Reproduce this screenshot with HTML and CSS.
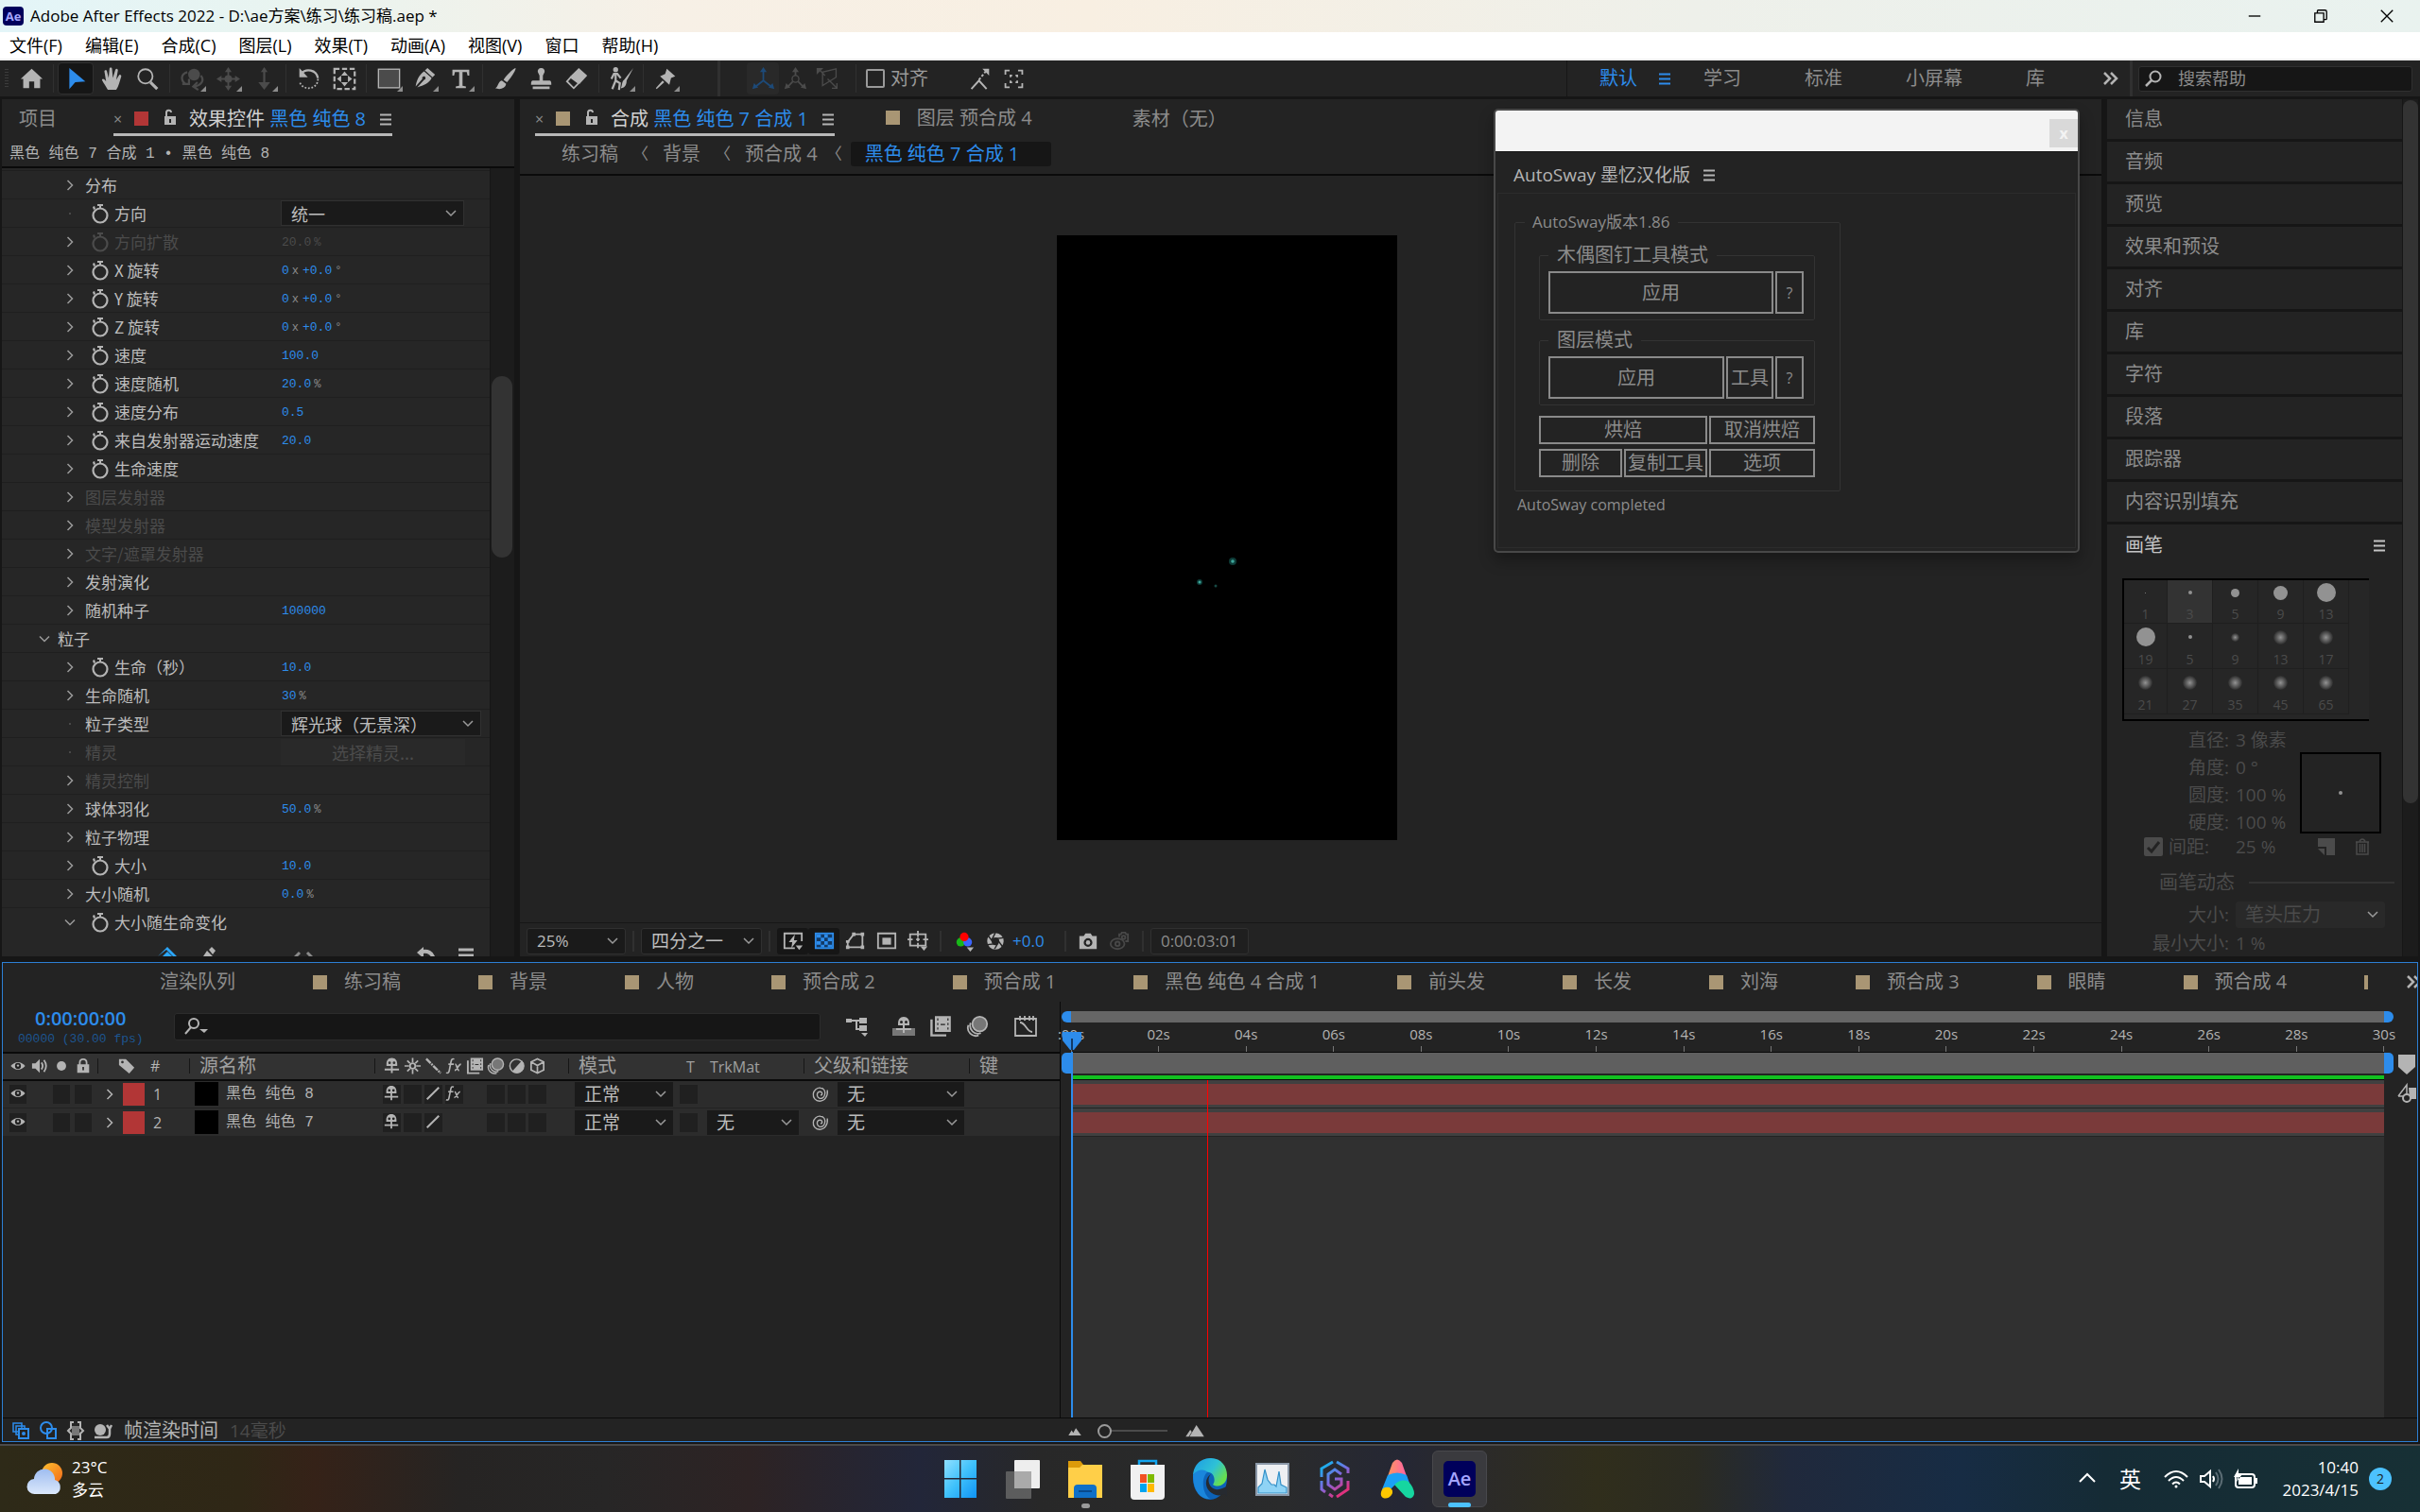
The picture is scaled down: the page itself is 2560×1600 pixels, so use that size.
FILE: index.html
```
<!DOCTYPE html>
<html lang="zh-CN">
<head>
    <meta charset="UTF-8">
    <title>Adobe After Effects 2022 - D:\ae方案\练习\练习稿.aep *</title>
    <link rel="stylesheet" href="styles.css">
</head>
<body>
    <!-- shared icons -->
    <svg class="sprite" aria-hidden="true">
        <symbol id="i-watch" viewBox="0 0 20 22"><circle cx="10" cy="13" r="7.5" fill="none" stroke="currentColor" stroke-width="2.2"/><path d="M7 1h6v2h-2v3H9V3H7zM2 4l2-1 1 3-2 1z" fill="currentColor"/></symbol>
        <symbol id="i-right" viewBox="0 0 16 16"><path d="M5.5 3l5 5-5 5" fill="none" stroke="currentColor" stroke-width="1.5"/></symbol>
        <symbol id="i-down" viewBox="0 0 16 16"><path d="M3 5.5l5 5 5-5" fill="none" stroke="currentColor" stroke-width="1.5"/></symbol>
        <symbol id="i-menu" viewBox="0 0 14 14"><path d="M1 2.5h12M1 7.5h12M1 12.5h12" stroke="currentColor" stroke-width="2"/></symbol>
        <symbol id="i-lock-open" viewBox="0 0 14 18"><path d="M3 9V4.500a2.500 2.500 0 0 1 5-.5" fill="none" stroke="currentColor" stroke-width="2"/><path fill="currentColor" fill-rule="evenodd" d="M1 8h12v9H1zM6 11v4h2v-4z"/></symbol>
        <symbol id="i-fish" viewBox="0 0 20 20"><path fill="currentColor" fill-rule="evenodd" d="M10 1c4 0 6 3 6 7v2H11v3h7v2h-7v3H9v-3H2v-2h7v-3H4V8c0-4 2-7 6-7zM7.500 5a1.500 1.500 0 1 0 0 3 1.500 1.500 0 0 0 0-3zM12.500 5a1.500 1.500 0 1 0 0 3 1.500 1.500 0 0 0 0-3z"/></symbol>
        <symbol id="i-film" viewBox="0 0 20 20"><path fill="currentColor" fill-rule="evenodd" d="M5 1h14v14H5zM7 3v2h1V3zM7 7v2h1V7zM7 11v2h1v-2zM16 3v2h1V3zM16 7v2h1V7zM16 11v2h1v-2zM10 8v1h4V8z"/><path d="M2 4v14h13" fill="none" stroke="currentColor" stroke-width="2"/></symbol>
        <symbol id="i-blur" viewBox="0 0 20 20"><circle cx="12" cy="8" r="6.5" fill="#777" stroke="currentColor" stroke-width="1.5"/><path d="M4 7a7 7 0 0 0 9 9M2 9a7 7 0 0 0 9 9" fill="none" stroke="currentColor" stroke-width="1.5"/></symbol>
        <symbol id="i-eye" viewBox="0 0 20 20"><path d="M1.500 10Q10 1 18.500 10 10 19 1.500 10z" fill="currentColor"/><circle cx="10" cy="10" r="3.5" fill="#232323"/><circle cx="10" cy="9.5" r="1.3" fill="currentColor"/></symbol>
        <symbol id="i-fx" viewBox="0 0 20 20"><path d="M10 2.500c-2-1-3 0-3.500 2.500L4.500 15c-.5 2.500-1.500 3.500-3.500 2.500M3.500 8h6M11 8c2 0 2 7 4.500 7M17.500 8c-3 0-4 7-7 7" fill="none" stroke="currentColor" stroke-width="1.7"/></symbol>
        <symbol id="i-slash" viewBox="0 0 20 20"><path d="M3 17L17 3" stroke="currentColor" stroke-width="2.2"/></symbol>
        <symbol id="i-spiral" viewBox="0 0 20 20"><path d="M18 5c1 7-3 13-9 13-5 0-8-4-7.500-8.500S6 2 10 2.500c4 0 6 4 5 8s-4 5-6.500 4-3-4-2-6 4-2 5-.5 0 3-1.500 3" fill="none" stroke="currentColor" stroke-width="1.5"/></symbol>
        <symbol id="i-search" viewBox="0 0 20 20"><circle cx="12" cy="8" r="5.5" fill="none" stroke="currentColor" stroke-width="2"/><path d="M8 12l-6 6" stroke="currentColor" stroke-width="2.5"/></symbol>
        <symbol id="i-more" viewBox="0 0 18 18"><path d="M2 3l6 6-6 6M9 3l6 6-6 6" fill="none" stroke="currentColor" stroke-width="2.5"/></symbol>
    </svg>

    <header class="titlebar">
        <svg class="app-logo" viewBox="0 0 22 22"><rect width="22" height="20" y="1" rx="4" fill="#00005b"/><text x="11" y="16" text-anchor="middle">Ae</text></svg>
        <span class="title">Adobe After Effects 2022 - D:\ae方案\练习\练习稿.aep *</span>
        <div class="window-buttons">
            <button aria-label="最小化"><svg viewBox="0 0 18 18"><path d="M2 9h14"/></svg></button>
            <button aria-label="还原"><svg viewBox="0 0 18 18"><path d="M2 5.500h10.500V16H2zM5 5V3q0-1 1-1h8q2 0 2 2v8q0 1-1 1h-2"/></svg></button>
            <button aria-label="关闭"><svg viewBox="0 0 18 18"><path d="M2 2l14 14M16 2L2 16"/></svg></button>
        </div>
    </header>

    <nav class="menubar">
        <a href="#">文件(F)</a><a href="#">编辑(E)</a><a href="#">合成(C)</a><a href="#">图层(L)</a><a href="#">效果(T)</a><a href="#">动画(A)</a><a href="#">视图(V)</a><a href="#">窗口</a><a href="#">帮助(H)</a>
    </nav>

    <div class="toolbar">
        <span class="grip"></span>
        <button class="tool" aria-label="主页"><svg viewBox="0 0 28 28"><path fill="currentColor" d="M14 2L1 14h3v11h7v-8h6v8h7V14h3z"/></svg></button>
        <i class="sep"></i>
        <button class="tool on" aria-label="选取工具"><svg viewBox="0 0 28 28"><path fill="currentColor" d="M6 1v25l7-8 12-1z"/></svg></button>
        <button class="tool" aria-label="手形工具"><svg viewBox="0 0 28 28"><path fill="currentColor" d="M9 27c-2-4-5-8-7-12 1-2 3-1 5 2L5 5c0-2 3-2 3 0l2 8 1-11c0-2 3-2 3 0l1 11 3-10c1-2 3-1 3 1l-2 11 3-5c1-2 3-1 3 1-2 6-3 12-6 16z"/></svg></button>
        <button class="tool" aria-label="缩放工具"><svg viewBox="0 0 28 28"><circle cx="11" cy="11" r="8.5" fill="none" stroke="currentColor" stroke-width="2"/><path d="M17 18l8 8" stroke="currentColor" stroke-width="3.5"/></svg></button>
        <i class="sep"></i>
        <button class="tool more dim" aria-label="绕光标旋转"><svg viewBox="0 0 28 28"><circle cx="16" cy="9" r="7" fill="currentColor"/><path d="M8 6C0 8 0 16 6 20M2 20h8v-6M24 10c5 6 0 12-8 13M20 18l-5 5 6 4" fill="none" stroke="currentColor" stroke-width="2.5"/></svg></button>
        <button class="tool more dim" aria-label="平移"><svg viewBox="0 0 28 28"><circle cx="14" cy="14" r="4.5" fill="currentColor"/><path d="M14 5v18M5 14h18" stroke="currentColor" stroke-width="2"/><path fill="currentColor" d="M14 0l4 6h-8zM14 28l4-6h-8zM0 14l6-4v8zM28 14l-6-4v8z"/></svg></button>
        <button class="tool more dim" aria-label="推拉"><svg viewBox="0 0 28 28"><path d="M14 2v18" stroke="currentColor" stroke-width="2.5"/><path fill="currentColor" d="M14 0l4 6h-8zM14 27l7-9H7z"/></svg></button>
        <i class="sep"></i>
        <button class="tool" aria-label="旋转工具"><svg viewBox="0 0 28 28"><path d="M5 8c6-7 18-5 20 5" fill="none" stroke="currentColor" stroke-width="2.5"/><path d="M25 14c0 13-18 15-22 3" fill="none" stroke="currentColor" stroke-width="2" stroke-dasharray="2 2"/><path fill="currentColor" d="M3 1v11h10z"/></svg></button>
        <button class="tool" aria-label="锚点工具"><svg viewBox="0 0 28 28"><path d="M2 2h24v24H2z" fill="none" stroke="currentColor" stroke-width="2.5" stroke-dasharray="6 3"/><path fill="currentColor" d="M14 5l4 5h-8zM14 23l4-5h-8zM5 14l5-4v8zM23 14l-5-4v8z"/></svg></button>
        <i class="sep"></i>
        <button class="tool more" aria-label="矩形工具"><svg viewBox="0 0 28 28"><rect x="1.500" y="2.500" width="25" height="22" fill="#4b4b4b" stroke="currentColor" stroke-width="1.5"/></svg></button>
        <button class="tool more" aria-label="钢笔工具"><svg viewBox="0 0 28 28"><path fill="currentColor" fill-rule="evenodd" d="M17 1l9 8-3 3-9-8zM13 5l9 8c-3 6-9 9-17 11l8-9a2 2 0 1 0-2-1l-8 9C4 16 7 9 13 5z"/></svg></button>
        <button class="tool more" aria-label="文字工具"><svg viewBox="0 0 28 28"><path fill="currentColor" d="M4 3h20v7h-2l-1-4h-5v16l4 1v2H8v-2l4-1V6H7l-1 4H4z"/></svg></button>
        <i class="sep"></i>
        <button class="tool" aria-label="画笔工具"><svg viewBox="0 0 28 28"><path fill="currentColor" d="M26 1c2 1-7 14-10 17l-4-3C14 11 24 1 26 1zM10 16l5 4c-1 6-8 7-13 5 4-1 3-8 8-9z"/></svg></button>
        <button class="tool" aria-label="仿制图章工具"><svg viewBox="0 0 28 28"><path fill="currentColor" d="M14 1a4 4 0 0 1 4 5l-2 4v6h8q2 0 2 4v1H2v-1q0-4 2-4h8v-6l-2-4a4 4 0 0 1 4-5zM4 23h20v3H4z"/></svg></button>
        <button class="tool" aria-label="橡皮擦工具"><svg viewBox="0 0 28 28"><path fill="currentColor" d="M16 1l10 9-9 10L6 11z"/><path d="M6.500 12L2 17l8 8 6-6z" fill="none" stroke="currentColor" stroke-width="2"/></svg></button>
        <i class="sep"></i>
        <button class="tool more" aria-label="Roto 笔刷工具"><svg viewBox="0 0 28 28"><circle cx="7" cy="3" r="3" fill="currentColor"/><path d="M2 14l3-6h4l4 5M7 8v8l-4 10M7 16l5 3-1 8" fill="none" stroke="currentColor" stroke-width="2.5"/><path fill="currentColor" d="M28 1L20 16c0 6-3 9-7 9 2-3 1-8 4-10z"/></svg></button>
        <i class="sep"></i>
        <button class="tool more" aria-label="人偶位置控点工具"><svg viewBox="0 0 28 28"><path fill="currentColor" d="M15 2l10 9-5 2-2 8-11-10 6-3zM10 16l2 2-9 8-1-1z"/></svg></button>
        <i class="sep thick"></i>
        <button class="tool axis on-dim" aria-label="本地轴"><svg viewBox="0 0 28 28"><path d="M14 16V4M14 16L5 23M14 16l9 7" stroke="currentColor" stroke-width="2"/><path fill="currentColor" d="M14 0l4 6h-8zM1 26l2-7 5 5zM27 26l-2-7-5 5z"/></svg></button>
        <button class="tool axis dim" aria-label="世界轴"><svg viewBox="0 0 28 28"><path d="M14 10V4M11 17l-6 6M17 17l6 6" stroke="currentColor" stroke-width="2"/><circle cx="14" cy="14" r="4" fill="none" stroke="currentColor" stroke-width="1.5"/><path fill="currentColor" d="M14 0l4 6h-8zM1 26l2-7 5 5zM27 26l-2-7-5 5z"/></svg></button>
        <button class="tool axis dim" aria-label="视图轴"><svg viewBox="0 0 28 28"><path d="M5 4l6 6M8 6v16L24 12V2zM14 14l11 11M19 25h6v-6" fill="none" stroke="currentColor" stroke-width="1.5"/><path fill="currentColor" d="M1 1h8L1 9z"/></svg></button>
        <i class="sep wide"></i>
        <label class="snap"><input type="checkbox"> 对齐</label>
        <button class="tool snap-tool" aria-label="对齐边缘"><svg viewBox="0 0 28 28"><path d="M4 26l9-10 9 10" fill="none" stroke="currentColor" stroke-width="2.2"/><path d="M13 15l9-11" fill="none" stroke="currentColor" stroke-width="2.2" stroke-dasharray="3 2"/><path fill="currentColor" d="M17 2h8v8z"/></svg></button>
        <button class="tool snap-tool" aria-label="对齐特征"><svg viewBox="0 0 28 28"><path d="M4 9V4h5M19 4h5v5M24 19v5h-5M9 24H4v-5M10 12v-2h2M16 10h2v2M18 16v2h-2M12 18h-2v-2" fill="none" stroke="currentColor" stroke-width="2"/></svg></button>
        <nav class="workspaces">
            <a href="#" class="current">默认 <svg class="ic14"><use href="#i-menu"/></svg></a>
            <a href="#">学习</a><a href="#">标准</a><a href="#">小屏幕</a><a href="#">库</a>
            <button aria-label="更多工作区"><svg class="ic18"><use href="#i-more"/></svg></button>
        </nav>
        <label class="help-search"><svg class="ic20"><use href="#i-search"/></svg><input type="text" placeholder="搜索帮助" aria-label="搜索帮助"></label>
    </div>

    <main class="workspace">
        <section class="panel effects">
            <div class="tabs">
                <a href="#" class="tab-project">项目</a>
                <div class="tab">
                    <span class="x">×</span><i class="chip red"></i><svg class="lock"><use href="#i-lock-open"/></svg>
                    <span class="tab-name">效果控件 <b>黑色 纯色 8</b></span><svg class="ic14"><use href="#i-menu"/></svg>
                </div>
            </div>
            <div class="effect-path">黑色 纯色 7 合成 1 • 黑色 纯色 8</div>
            <div class="effect-scroll">
                <div class="effect-rows">
                    <div class="row"><div class="name"><svg><use href="#i-right"/></svg>分布</div></div>
                    <div class="row"><div class="name dot"><svg class="watch"><use href="#i-watch"/></svg><label for="dir">方向</label></div><select id="dir" class="w194"><option>统一</option></select></div>
                    <div class="row off"><div class="name"><svg><use href="#i-right"/></svg><svg class="watch"><use href="#i-watch"/></svg>方向扩散</div><span class="val">20.0<small>%</small></span></div>
                    <div class="row"><div class="name"><svg><use href="#i-right"/></svg><svg class="watch"><use href="#i-watch"/></svg>X 旋转</div><span class="val">0<small>x</small>+0.0<small>°</small></span></div>
                    <div class="row"><div class="name"><svg><use href="#i-right"/></svg><svg class="watch"><use href="#i-watch"/></svg>Y 旋转</div><span class="val">0<small>x</small>+0.0<small>°</small></span></div>
                    <div class="row"><div class="name"><svg><use href="#i-right"/></svg><svg class="watch"><use href="#i-watch"/></svg>Z 旋转</div><span class="val">0<small>x</small>+0.0<small>°</small></span></div>
                    <div class="row"><div class="name"><svg><use href="#i-right"/></svg><svg class="watch"><use href="#i-watch"/></svg>速度</div><span class="val">100.0</span></div>
                    <div class="row"><div class="name"><svg><use href="#i-right"/></svg><svg class="watch"><use href="#i-watch"/></svg>速度随机</div><span class="val">20.0<small>%</small></span></div>
                    <div class="row"><div class="name"><svg><use href="#i-right"/></svg><svg class="watch"><use href="#i-watch"/></svg>速度分布</div><span class="val">0.5</span></div>
                    <div class="row"><div class="name"><svg><use href="#i-right"/></svg><svg class="watch"><use href="#i-watch"/></svg>来自发射器运动速度</div><span class="val">20.0</span></div>
                    <div class="row"><div class="name"><svg><use href="#i-right"/></svg><svg class="watch"><use href="#i-watch"/></svg>生命速度</div></div>
                    <div class="row off"><div class="name"><svg><use href="#i-right"/></svg>图层发射器</div></div>
                    <div class="row off"><div class="name"><svg><use href="#i-right"/></svg>模型发射器</div></div>
                    <div class="row off"><div class="name"><svg><use href="#i-right"/></svg>文字/遮罩发射器</div></div>
                    <div class="row"><div class="name"><svg><use href="#i-right"/></svg>发射演化</div></div>
                    <div class="row"><div class="name"><svg><use href="#i-right"/></svg>随机种子</div><span class="val">100000</span></div>
                    <div class="row"><div class="name top"><svg><use href="#i-down"/></svg>粒子</div></div>
                    <div class="row"><div class="name"><svg><use href="#i-right"/></svg><svg class="watch"><use href="#i-watch"/></svg>生命（秒）</div><span class="val">10.0</span></div>
                    <div class="row"><div class="name"><svg><use href="#i-right"/></svg>生命随机</div><span class="val">30<small>%</small></span></div>
                    <div class="row"><div class="name dot"><label for="ptype">粒子类型</label></div><select id="ptype" class="w212"><option>辉光球（无景深）</option></select></div>
                    <div class="row off"><div class="name dot">精灵</div><button class="sprite-btn" disabled>选择精灵...</button></div>
                    <div class="row off"><div class="name"><svg><use href="#i-right"/></svg>精灵控制</div></div>
                    <div class="row"><div class="name"><svg><use href="#i-right"/></svg>球体羽化</div><span class="val">50.0<small>%</small></span></div>
                    <div class="row"><div class="name"><svg><use href="#i-right"/></svg>粒子物理</div></div>
                    <div class="row"><div class="name"><svg><use href="#i-right"/></svg><svg class="watch"><use href="#i-watch"/></svg>大小</div><span class="val">10.0</span></div>
                    <div class="row"><div class="name"><svg><use href="#i-right"/></svg>大小随机</div><span class="val">0.0<small>%</small></span></div>
                    <div class="row"><div class="name"><svg><use href="#i-down"/></svg><svg class="watch"><use href="#i-watch"/></svg>大小随生命变化</div></div>
                    <div class="curve-tools">
                        <svg viewBox="0 0 20 20"><path fill="#2ba7ff" d="M0 10L10 0l10 10-2 2-9-9z"/><path fill="#2ba7ff" d="M3 12l7-7 7 7v4H3z"/></svg>
                        <svg viewBox="0 0 20 20"><path fill="#b4b4b4" d="M12 3l3-3 4 4-3 4zM10 4l6 6-10 8-4 1 2-6z"/></svg>
                        <svg viewBox="0 0 20 20"><path d="M6 6l-6 6M14 6l6 6" stroke="#8a8a8a" stroke-width="3"/></svg>
                        <svg viewBox="0 0 20 20"><path d="M3 6c8-3 14 0 15 8" fill="none" stroke="#b4b4b4" stroke-width="4"/><path fill="#b4b4b4" d="M0 6l7-6v12z"/></svg>
                        <svg viewBox="0 0 20 20"><path d="M2 3h16M2 9h16" stroke="#b4b4b4" stroke-width="3"/></svg>
                    </div>
                </div>
                <div class="vscroll"><i class="thumb-left"></i></div>
            </div>
        </section>

        <section class="panel comp">
            <div class="tabs">
                <div class="tab">
                    <span class="x">×</span><i class="chip"></i><svg class="lock"><use href="#i-lock-open"/></svg>
                    <span class="tab-name">合成 <b>黑色 纯色 7 合成 1</b></span><svg class="ic14"><use href="#i-menu"/></svg>
                </div>
                <a href="#" class="tab-layer"><i class="chip"></i>图层 预合成 4</a>
                <a href="#" class="tab-footage">素材（无）</a>
            </div>
            <div class="crumbs">
                <a href="#">练习稿</a><span>〈</span><a href="#">背景</a><span>〈</span><a href="#">预合成 4</a><span>〈</span><a href="#" class="current">黑色 纯色 7 合成 1</a>
            </div>
            <div class="viewer">
                <svg class="canvas" viewBox="0 0 360 640">
                    <rect width="360" height="640" fill="#000"/>
                    <circle cx="186" cy="345" r="4" fill="#0d3b37"/><circle cx="186" cy="345" r="1.8" fill="#3fa79b"/>
                    <circle cx="151" cy="367" r="3" fill="#0d3b37"/><circle cx="151" cy="367" r="1.5" fill="#3fa79b"/>
                    <circle cx="168" cy="371" r="1.5" fill="#174a45"/>
                </svg>
            </div>
            <div class="comp-footer">
                <select class="zoom" aria-label="放大率"><option>25%</option></select>
                <i class="sep"></i>
                <select class="quality" aria-label="分辨率"><option>四分之一</option></select>
                <i class="sep"></i>
                <button class="fbtn on" aria-label="快速预览"><svg viewBox="0 0 24 24"><path d="M14 20H2V3h20v9" fill="none" stroke="#b4b4b4" stroke-width="2"/><path fill="#b4b4b4" d="M14 4l-7 9h4l-1 7 7-9h-4zM15 17h8l-4 5z"/></svg></button>
                <button class="fbtn on" aria-label="透明网格"><svg viewBox="0 0 24 24"><rect x="2" y="3" width="20" height="17" fill="#123a66" stroke="#2d8ceb" stroke-width="2"/><path fill="#2d8ceb" d="M3 4h5v4H3zM12 4h4v4h-4zM8 8h4v4H8zM16 8h5v4h-5zM3 12h5v4H3zM12 12h4v4h-4zM8 16h4v3H8zM16 16h5v3h-5z"/></svg></button>
                <button class="fbtn" aria-label="蒙版和形状"><svg viewBox="0 0 24 24"><path d="M3 19V13L10 4h10v15z" fill="none" stroke="#b4b4b4" stroke-width="2"/><path fill="#b4b4b4" d="M8 2h4v4H8zM18 2h4v4h-4zM18 17h4v4h-4zM1 17h4v4H1zM1 11h4v3H1z"/></svg></button>
                <button class="fbtn" aria-label="目标区域"><svg viewBox="0 0 24 24"><path d="M2 3h20v17H2z" fill="none" stroke="#b4b4b4" stroke-width="2"/><path fill="#b4b4b4" d="M7 8h10v8H7z"/></svg></button>
                <button class="fbtn" aria-label="网格和参考线"><svg viewBox="0 0 24 24"><path d="M3 4h18v13H3zM12 0v7M12 14v6M0 10h6M18 10h6M10 10h4M12 8v4" fill="none" stroke="#b4b4b4" stroke-width="2"/><path fill="#b4b4b4" d="M15 18h8l-4 5z"/></svg></button>
                <i class="sep"></i>
                <button class="fbtn" aria-label="通道"><svg viewBox="0 0 24 24"><circle cx="8" cy="13" r="5" fill="#18b818"/><circle cx="16" cy="13" r="5" fill="#3c64ff"/><circle cx="12" cy="7" r="5" fill="#f00"/><path fill="#b4b4b4" d="M15 19h8l-4 5z"/></svg></button>
                <button class="fbtn" aria-label="重置曝光度"><svg viewBox="0 0 24 24"><circle cx="12" cy="12" r="7" fill="none" stroke="#b4b4b4" stroke-width="5"/><path d="M12 2l-4 8M21 8l-8 1M20 18l-5-7M11 21l4-7M3 16l8-1M4 6l5 7" stroke="#232323" stroke-width="1.5"/></svg></button>
                <a href="#" class="exposure">+0.0</a>
                <i class="sep"></i>
                <button class="fbtn" aria-label="拍摄快照"><svg viewBox="0 0 24 24"><path fill="#b4b4b4" fill-rule="evenodd" d="M2 6h5l2-3h6l2 3h5v15H2zM12 8.500a5 5 0 1 0 0 10 5 5 0 0 0 0-10z"/><circle cx="12" cy="13.500" r="2.500" fill="#b4b4b4"/></svg></button>
                <button class="fbtn" aria-label="显示快照"><svg viewBox="0 0 24 24" stroke="#484848" fill="none" stroke-width="2"><ellipse cx="10" cy="15" rx="8" ry="6"/><circle cx="10" cy="15" r="2.500"/><path d="M12 7V4h2l1-2h4l1 2h2v8h-3"/><circle cx="17" cy="7.500" r="2"/></svg></button>
                <i class="sep"></i>
                <span class="timebox">0:00:03:01</span>
            </div>
        </section>

        <section class="panel side">
            <div class="side-list">
                <a href="#">信息</a><a href="#">音频</a><a href="#">预览</a><a href="#">效果和预设</a><a href="#">对齐</a><a href="#">库</a><a href="#">字符</a><a href="#">段落</a><a href="#">跟踪器</a><a href="#">内容识别填充</a>
                <div class="brush-head"><span>画笔</span><svg class="ic14"><use href="#i-menu"/></svg></div>
                <div class="brush-grid">
                    <button><i class="tip s1"></i>1</button><button class="sel"><i class="tip s3"></i>3</button><button><i class="tip s9"></i>5</button><button><i class="tip s15"></i>9</button><button><i class="tip s20"></i>13</button>
                    <button><i class="tip s20"></i>19</button><button><i class="tip s3"></i>5</button><button><i class="tip s9 soft"></i>9</button><button><i class="tip s15 soft"></i>13</button><button><i class="tip s15 soft"></i>17</button>
                    <button><i class="tip s15 soft"></i>21</button><button><i class="tip s15 soft"></i>27</button><button><i class="tip s15 soft"></i>35</button><button><i class="tip s15 soft"></i>45</button><button><i class="tip s15 soft"></i>65</button>
                </div>
                <div class="brush-props">
                    <dl>
                        <dt>直径:</dt><dd>3 像素</dd>
                        <dt>角度:</dt><dd>0 °</dd>
                        <dt>圆度:</dt><dd>100 %</dd>
                        <dt>硬度:</dt><dd>100 %</dd>
                    </dl>
                    <div class="tip-preview"><i class="tip s3"></i></div>
                </div>
                <div class="spacing">
                    <label><input type="checkbox" checked disabled> 间距:</label><span>25 %</span>
                    <svg viewBox="0 0 18 18"><path fill="currentColor" d="M0 0h18v18H9V9H0zM0 11h7v7z"/></svg>
                    <svg viewBox="0 0 18 18" fill="none" stroke="currentColor" stroke-width="1.5"><path d="M2 4h14M6 3q3-4 6 0M3 4v13h12V4M6.500 6v9M9 6v9M11.500 6v9"/></svg>
                </div>
                <div class="dyn-head"><span>画笔动态</span></div>
                <div class="dyn-row"><label for="dynsize">大小:</label><select id="dynsize" disabled><option>笔头压力</option></select></div>
                <div class="dyn-row min"><span>最小大小:</span><span>1 %</span></div>
            </div>
            <div class="vscroll"><i class="thumb-right"></i></div>
        </section>
    </main>

    <section class="timeline">
        <nav class="comp-tabs">
            <a href="#" class="queue">渲染队列</a>
            <a href="#"><i class="chip"></i>练习稿</a><a href="#"><i class="chip"></i>背景</a><a href="#"><i class="chip"></i>人物</a><a href="#"><i class="chip"></i>预合成 2</a><a href="#"><i class="chip"></i>预合成 1</a><a href="#"><i class="chip"></i>黑色 纯色 4 合成 1</a><a href="#"><i class="chip"></i>前头发</a><a href="#"><i class="chip"></i>长发</a><a href="#"><i class="chip"></i>刘海</a><a href="#"><i class="chip"></i>预合成 3</a><a href="#"><i class="chip"></i>眼睛</a><a href="#"><i class="chip"></i>预合成 4</a>
            <i class="chip cut"></i>
            <button aria-label="更多合成"><svg class="ic18"><use href="#i-more"/></svg></button>
        </nav>
        <div class="timeline-main">
            <div class="layers">
                <div class="layers-top">
                    <div class="timecode"><strong>0:00:00:00</strong><span>00000 (30.00 fps)</span></div>
                    <label class="layer-search"><svg viewBox="0 0 26 20"><circle cx="10" cy="7" r="5" fill="none" stroke="currentColor" stroke-width="2"/><path d="M7 11l-6 7" stroke="currentColor" stroke-width="2"/><path fill="currentColor" d="M16 13h9l-4 4z"/></svg><input type="text" aria-label="搜索图层"></label>
                    <button aria-label="合成微型流程图"><svg viewBox="0 0 24 24"><path d="M1 6h8M8 6h12M12 6v9h8" fill="none" stroke="currentColor" stroke-width="2"/><path fill="currentColor" d="M1 4h6v4H1zM15 3h8v6h-8zM15 11h8v6h-8zM17 19h7l-3 4z"/></svg></button>
                    <button aria-label="隐藏消隐图层"><svg viewBox="0 0 24 24"><path fill="#777" d="M0 14h24v8H0z"/><use href="#i-fish" width="20" height="20" x="2" y="1"/></svg></button>
                    <button aria-label="帧混合"><svg viewBox="0 0 20 20"><use href="#i-film"/></svg></button>
                    <button aria-label="运动模糊"><svg viewBox="0 0 20 20"><use href="#i-blur"/></svg></button>
                    <button aria-label="图表编辑器"><svg viewBox="0 0 24 24"><path d="M1 4h22v18H1zM6 8c6 0 7 10 13 10M6 1v5M11 1v5M16 1v5M20 1v5" fill="none" stroke="currentColor" stroke-width="1.8"/></svg></button>
                </div>
                <table>
                    <colgroup><col class="c-av"><col class="c-num"><col class="c-name"><col class="c-sw"><col class="c-mode"><col class="c-trk"><col class="c-parent"><col class="c-key"></colgroup>
                    <thead>
                        <tr>
                            <th><div class="cells av"><svg><use href="#i-eye"/></svg><svg viewBox="0 0 20 20"><path fill="currentColor" d="M1 7h4l5-5v16l-5-5H1z"/><path d="M12 6q3 4 0 8M15 3q5 7 0 14" fill="none" stroke="currentColor" stroke-width="2"/></svg><svg viewBox="0 0 20 20"><circle cx="10" cy="10" r="5.5" fill="currentColor"/></svg><svg viewBox="0 0 20 20"><path d="M6 9V6q0-4 4-4t4 4v3" fill="none" stroke="currentColor" stroke-width="2"/><path fill="currentColor" fill-rule="evenodd" d="M3 8h14v10H3zM9 11v4h2v-4z"/></svg></div></th>
                            <th><div class="cells"><svg class="tag" viewBox="0 0 20 20"><path fill="currentColor" fill-rule="evenodd" d="M1 2h8l10 10-6 7L1 9zM5 4a1.500 1.500 0 1 0 0 3 1.500 1.500 0 0 0 0-3z"/></svg><span class="hash">#</span></div></th>
                            <th>源名称</th>
                            <th><div class="cells sw"><svg><use href="#i-fish"/></svg><svg viewBox="0 0 20 20"><circle cx="10" cy="10" r="3" fill="none" stroke="currentColor" stroke-width="2"/><path d="M10 1v5M10 14v5M1 10h5M14 10h5M4 4l3 3M13 13l3 3M16 4l-3 3M7 13l-3 3" stroke="currentColor" stroke-width="1.8"/></svg><svg viewBox="0 0 20 20"><path d="M2 2l16 16" stroke="currentColor" stroke-width="2.5" stroke-dasharray="7 1 2 1"/></svg><svg><use href="#i-fx"/></svg><svg><use href="#i-film"/></svg><svg><use href="#i-blur"/></svg><svg viewBox="0 0 20 20"><circle cx="10" cy="10" r="7.5" fill="none" stroke="currentColor" stroke-width="1.5"/><path fill="currentColor" d="M16 4A8 8 0 0 1 5 16z"/></svg><svg viewBox="0 0 20 20"><path d="M10 2l7 3.500v9L10 18l-7-3.500v-9zM3 5.500l7 4 7-4M10 9.500V18" fill="none" stroke="currentColor" stroke-width="1.8"/></svg></div></th>
                            <th>模式</th>
                            <th><span class="t">T</span><small>TrkMat</small></th>
                            <th>父级和链接</th>
                            <th>键</th>
                        </tr>
                    </thead>
                    <tbody>
                        <tr>
                            <td><div class="cells av"><i class="box"><svg><use href="#i-eye"/></svg></i><i></i><i class="box"></i><i class="box"></i></div></td>
                            <td><div class="cells num"><svg><use href="#i-right"/></svg><i class="label"></i>1</div></td>
                            <td><div class="cells src"><i class="solid"></i>黑色 纯色 8</div></td>
                            <td><div class="cells sw"><i class="box"><svg><use href="#i-fish"/></svg></i><i class="box"></i><i class="box"><svg><use href="#i-slash"/></svg></i><i class="box"><svg><use href="#i-fx"/></svg></i><i></i><i class="box"></i><i class="box"></i><i class="box"></i></div></td>
                            <td><select class="mode" aria-label="模式"><option>正常</option></select></td>
                            <td><div class="cells trk"><i class="box"></i></div></td>
                            <td><div class="cells parent"><svg><use href="#i-spiral"/></svg><select aria-label="父级"><option>无</option></select></div></td>
                            <td></td>
                        </tr>
                        <tr>
                            <td><div class="cells av"><i class="box"><svg><use href="#i-eye"/></svg></i><i></i><i class="box"></i><i class="box"></i></div></td>
                            <td><div class="cells num"><svg><use href="#i-right"/></svg><i class="label"></i>2</div></td>
                            <td><div class="cells src"><i class="solid"></i>黑色 纯色 7</div></td>
                            <td><div class="cells sw"><i class="box"><svg><use href="#i-fish"/></svg></i><i class="box"></i><i class="box"><svg><use href="#i-slash"/></svg></i><i></i><i></i><i class="box"></i><i class="box"></i><i class="box"></i></div></td>
                            <td><select class="mode" aria-label="模式"><option>正常</option></select></td>
                            <td><div class="cells trk"><i class="box"></i><select aria-label="轨道遮罩"><option>无</option></select></div></td>
                            <td><div class="cells parent"><svg><use href="#i-spiral"/></svg><select aria-label="父级"><option>无</option></select></div></td>
                            <td></td>
                        </tr>
                    </tbody>
                </table>
            </div>
            <div class="time">
                <div class="navigator"></div>
                <div class="ruler">
                    <span>:00s</span><span>02s</span><span>04s</span><span>06s</span><span>08s</span><span>10s</span><span>12s</span><span>14s</span><span>16s</span><span>18s</span><span>20s</span><span>22s</span><span>24s</span><span>26s</span><span>28s</span><span>30s</span>
                    <svg class="cti" viewBox="0 0 20 20"><path fill="#2d8ceb" d="M0 1h20v9l-8 10H8L0 10z"/><path d="M10 8v12" stroke="#123a66" stroke-width="2"/></svg>
                </div>
                <div class="workarea"></div>
                <div class="cached"></div>
                <div class="tracks">
                    <div class="track"><i></i></div>
                    <div class="track"><i></i></div>
                    <i class="playhead"></i>
                    <i class="preview-line"></i>
                </div>
            </div>
            <div class="time-side">
                <svg viewBox="0 0 18 22"><path fill="#b4b4b4" d="M0 1h18v13l-9 8-9-8z"/></svg>
                <svg viewBox="0 0 20 20"><path fill="#b4b4b4" d="M12 4h8v12h-7z"/><path d="M1 13L10 1v12H1" fill="none" stroke="#b4b4b4" stroke-width="1.5"/><circle cx="10" cy="15" r="4" fill="#232323" stroke="#b4b4b4" stroke-width="2"/></svg>
            </div>
        </div>
        <div class="timeline-footer">
            <div class="foot-left">
                <button class="on" aria-label="图层开关"><svg viewBox="0 0 20 20"><path d="M2 2h9v9H2zM5 5h9v9H5z" fill="none" stroke="currentColor" stroke-width="1.5"/><path d="M8 8h10v10H8z" fill="#232323" stroke="currentColor" stroke-width="2"/><circle cx="13" cy="13" r="2" fill="currentColor"/></svg></button>
                <button class="on" aria-label="转换控制"><svg viewBox="0 0 20 20" fill="none" stroke="currentColor" stroke-width="2"><circle cx="8" cy="7" r="6"/><path d="M9 8h9v10H9z"/></svg></button>
                <button aria-label="入点和出点"><svg viewBox="0 0 20 20"><path fill="#777" d="M6 5h8v10H6z"/><path d="M8 1H5v6l-3 3 3 3v6h3M12 1h3v6l3 3-3 3v6h-3" fill="none" stroke="currentColor" stroke-width="2"/></svg></button>
                <button aria-label="渲染时间"><svg viewBox="0 0 20 20"><circle cx="7" cy="9" r="6" fill="currentColor"/><path d="M1 17h13q3 0 3-4V6M14 4l3 4 2-4" fill="none" stroke="currentColor" stroke-width="2.5"/></svg></button>
                <span>帧渲染时间</span><em>14毫秒</em>
            </div>
            <div class="foot-zoom">
                <svg class="small-hill" viewBox="0 0 24 16"><path fill="#b4b4b4" d="M0 16l6-10 3 5L14 2l10 14z"/></svg>
                <input type="range" min="0" max="100" value="0" aria-label="时间缩放">
                <svg class="big-hill" viewBox="0 0 24 16"><path fill="#b4b4b4" d="M0 15l6-9 2 3-4 6zM5 15l9-15 10 15z"/></svg>
            </div>
        </div>
    </section>

    <aside class="autosway">
        <div class="float-bar"><button aria-label="关闭">x</button></div>
        <div class="float-title">AutoSway 墨忆汉化版 <svg class="ic14"><use href="#i-menu"/></svg></div>
        <div class="float-body">
            <fieldset class="outer">
                <legend>AutoSway版本1.86</legend>
                <fieldset>
                    <legend>木偶图钉工具模式</legend>
                    <div class="btns big"><button class="grow">应用</button><button class="q">?</button></div>
                </fieldset>
                <fieldset>
                    <legend>图层模式</legend>
                    <div class="btns big"><button class="grow">应用</button><button class="mid">工具</button><button class="q">?</button></div>
                </fieldset>
                <div class="btns bake"><button class="grow">烘焙</button><button class="end">取消烘焙</button></div>
                <div class="btns"><button class="grow">删除</button><button class="grow">复制工具</button><button class="end">选项</button></div>
            </fieldset>
            <p>AutoSway completed</p>
        </div>
    </aside>

    <footer class="taskbar">
        <div class="weather">
            <svg viewBox="0 0 40 40"><defs><linearGradient id="cloud" x2="0" y2="1"><stop stop-color="#9fbdf0"/><stop offset="1" stop-color="#dbe8fb"/></linearGradient><linearGradient id="sun" x2="1" y2="1"><stop stop-color="#ffc02e"/><stop offset="1" stop-color="#f26a1b"/></linearGradient></defs><circle cx="27" cy="14" r="11" fill="url(#sun)"/><path fill="url(#cloud)" d="M9 36a8 8 0 0 1-1-16 11 11 0 0 1 22 1 8 8 0 0 1 1 15z"/></svg>
            <div><span>23°C</span><span>多云</span></div>
        </div>
        <nav class="apps">
            <button aria-label="开始"><svg viewBox="0 0 36 44"><defs><linearGradient id="win" x2="1" y2="1"><stop stop-color="#8fe0ff"/><stop offset=".5" stop-color="#3fc1fb"/><stop offset="1" stop-color="#0f93f5"/></linearGradient></defs><path fill="url(#win)" d="M1 2h16v19H1zM18.500 2H35v19H18.500zM1 22.500h16V42H1zM18.500 22.500H35V42H18.500z"/></svg></button>
            <button aria-label="任务视图"><svg viewBox="0 0 36 44"><rect x="9" y="2" width="27" height="30" rx="1" fill="#eee"/><rect y="14" width="27" height="29" rx="1" fill="#666" fill-opacity=".85"/><path fill="#aaa" d="M9 14h18v18H9z"/></svg></button>
            <button class="running" aria-label="文件资源管理器"><svg viewBox="0 0 36 44"><path fill="#dc9b0a" d="M0 3h13l3 4h18v6H0z"/><path fill="#ffcf48" d="M0 10h12l3-3h21v35H0z"/><path fill="#0f70c8" d="M6 42V32q0-4 4-4h16q4 0 4 4v10z"/><path fill="#084a8c" d="M11 34h14v2H11z"/></svg></button>
            <button aria-label="Microsoft Store"><svg viewBox="0 0 36 44"><path d="M9 10V3h18v7" fill="none" stroke="#12a5f0" stroke-width="2.5"/><path fill="#f1f1f1" d="M0 7h36v33q0 4-4 4H4q-4 0-4-4z"/><path fill="#f25022" d="M10 17h7v9h-7z"/><path fill="#7fba00" d="M18 17h7v9h-7z"/><path fill="#00a4ef" d="M10 27h7v9h-7z"/><path fill="#ffb900" d="M18 27h7v9h-7z"/></svg></button>
            <button aria-label="Edge"><svg viewBox="0 0 36 44"><defs><linearGradient id="edge" x2="1" y2=".6"><stop stop-color="#1c9be6"/><stop offset=".6" stop-color="#2fc2d5"/><stop offset="1" stop-color="#68e04a"/></linearGradient></defs><ellipse cx="18" cy="22" rx="18" ry="22" fill="#0c62b8"/><path fill="url(#edge)" d="M0 18C1 5 10 0 19 0c11 0 17 9 17 18 0 10-9 14-15 10 3-3 2-12-4-13C9 13 3 14 0 18z"/><path fill="#1a86dc" d="M0 18c4-6 12-7 15-3-6 5-6 22 3 28C7 44 0 33 0 18z"/><path fill="#262a30" d="M19 17c-5 5-2 15 5 16 5 1 9-2 14-4l-2 12-2-3c-5 2-10 2-14-1-8-5-8-16-1-20z"/></svg></button>
            <button aria-label="监视器"><svg viewBox="0 0 36 44"><rect x="1" y="6" width="34" height="33" fill="#eef0f3" stroke="#8b98a8" stroke-width="2"/><path fill="#8fd3f5" stroke="#3390c8" stroke-width="1.2" d="M3 31l4-4 3-15 3 11 4 5 3 0 2 2 3-16 2 14 6 3v6H3z"/></svg></button>
            <button aria-label="G"><svg viewBox="0 0 36 44"><defs><linearGradient id="hex" x2=".6" y2="1"><stop stop-color="#00c2f0"/><stop offset=".55" stop-color="#7a6be0"/><stop offset="1" stop-color="#e0317d"/></linearGradient></defs><path d="M16 4L4 11v9M4 24v9l4 3M12 38l4 3M20 4l12 7v5M32 24v9l-12 8M25 17l-7-5-7 5v11l7 5 7-5v-6h-7" fill="none" stroke="url(#hex)" stroke-width="3"/></svg></button>
            <button aria-label="A"><svg viewBox="0 0 36 44"><defs><linearGradient id="pk" x2="1"><stop stop-color="#ff9a5a"/><stop offset="1" stop-color="#ff5fa8"/></linearGradient></defs><path fill="url(#pk)" d="M7 22L13 5q5-7 10 0l6 17q-10-5-22 0z"/><path fill="#1ba0f5" d="M2 33L8 18q10-5 20 0l4 11q-9-10-19 2l-5 5z"/><path fill="#ffc800" d="M1 36q1-6 9-5 5 3 2 8-4 5-9 3-3-2-2-6z"/><path fill="#16d6a0" d="M15 28q8-7 15-3 6 6 6 13-2 7-9 3z"/></svg></button>
            <button class="active" aria-label="After Effects"><svg class="ae" viewBox="0 0 34 38"><rect width="34" height="38" rx="5" fill="#00005b"/><text x="17" y="26" text-anchor="middle">Ae</text></svg></button>
        </nav>
        <div class="tray">
            <svg viewBox="0 0 20 20"><path d="M2 13l8-8 8 8" fill="none" stroke="#fff" stroke-width="2"/></svg>
            <span class="ime">英</span>
            <svg viewBox="0 0 26 20" fill="none" stroke="#fff" stroke-width="2"><path d="M1 8Q13-4 25 8M5 12q8-8 16 0M9 15.500q4-4 8 0"/><circle cx="13" cy="18" r="1.5" fill="#fff" stroke="none"/></svg>
            <svg viewBox="0 0 26 22" fill="none" stroke="#fff" stroke-width="2"><path d="M2 8h4l6-5v16l-6-5H2zM15 8q2 3 0 6"/><path d="M18 4q5 7 0 14M21 1q7 10 0 20" stroke="#5b6c74"/></svg>
            <svg viewBox="0 0 26 22"><rect x="2" y="6" width="20" height="14" rx="3" fill="none" stroke="#fff" stroke-width="2"/><path fill="#fff" d="M5 9h14v8H5zM23 10h2v6h-2zM5 0L0 9h4l-1 5 6-8H5z"/></svg>
            <div class="clock"><span>10:40</span><span>2023/4/15</span></div>
            <span class="badge">2</span>
        </div>
    </footer>
</body>
</html>
```
FILE: styles.css
```
* {
    margin: 0;
    padding: 0;
    box-sizing: border-box;
}

body {
    height: 100vh;
    overflow: hidden;
    display: flex;
    flex-direction: column;
    background: #161616;
    color: #8c8c8c;
    font-family: "Open Sans", "Noto Sans CJK SC", sans-serif;
    font-size: 20px;
    line-height: 26px;
}

a {
    color: inherit;
    text-decoration: none;
    white-space: nowrap;
}

button, input, select {
    font: inherit;
    color: inherit;
    background: none;
    border: none;
    outline: none;
}

button {
    display: flex;
    align-items: center;
    justify-content: center;
    white-space: nowrap;
}

i, em {
    font-style: normal;
}

svg {
    flex: none;
    display: block;
}

select {
    appearance: none;
    background: #1a1a1a url("data:image/svg+xml,%3Csvg xmlns='http://www.w3.org/2000/svg' width='14' height='14'%3E%3Cpath d='M2 4l5 5 5-5' fill='none' stroke='%239a9a9a' stroke-width='1.5'/%3E%3C/svg%3E") no-repeat right 6px center;
    color: #bdbdbd;
    border: 1px solid #303030;
    padding: 0 24px 0 10px;
}

.sprite {
    position: absolute;
    width: 0;
    height: 0;
}

.ic14 { width: 14px; height: 14px; }
.ic18 { width: 18px; height: 18px; }
.ic20 { width: 20px; height: 20px; }

.chip {
    flex: none;
    width: 15px;
    height: 15px;
    background: #a99674;
}

.chip.red {
    background: #b23636;
}

.sep {
    flex: none;
    width: 1px;
    height: 30px;
    margin: 0 4px;
    background: #303030;
}

/* title bar and menu */
.titlebar {
    flex: none;
    height: 34px;
    display: flex;
    align-items: center;
    padding-left: 3px;
    background: linear-gradient(90deg, #e3f5f8 0%, #e9f4f0 12%, #f7f0e6 28%, #f8efe2 45%, #eef0ea 70%, #e9f2ef 100%);
    color: #000;
}

.app-logo {
    width: 22px;
    height: 22px;
}

.app-logo text, .ae text {
    fill: #a5a5ff;
    font-weight: bold;
    font-size: 13px;
}

.title {
    margin-left: 7px;
    font-size: 17px;
}

.window-buttons {
    margin-left: auto;
    display: flex;
}

.window-buttons button {
    width: 70px;
    height: 34px;
}

.window-buttons svg {
    width: 16px;
    height: 16px;
    fill: none;
    stroke: #000;
    stroke-width: 1.5;
}

.menubar {
    flex: none;
    height: 30px;
    display: flex;
    gap: 24px;
    padding-left: 10px;
    background: #fff;
    border-bottom: 2px solid #f0f0f0;
    color: #000;
    font-size: 18px;
    line-height: 28px;
}

/* tools */
.toolbar {
    flex: none;
    height: 38px;
    margin-bottom: 3px;
    display: flex;
    align-items: center;
    background: #232323;
    color: #b4b4b4;
}

.grip {
    width: 4px;
    height: 20px;
    margin: 0 5px;
    background: repeating-linear-gradient(#3c3c3c 0 1px, #232323 1px 3px);
}

.tool {
    position: relative;
    flex: none;
    width: 38px;
    height: 34px;
}

.tool svg {
    width: 25px;
    height: 25px;
}

.tool.on {
    background: #161616;
    border: 1px solid #303030;
    border-radius: 4px;
    color: #2d8ceb;
}

.tool.more::after {
    content: "";
    position: absolute;
    right: 4px;
    bottom: 3px;
    border: 3px solid transparent;
    border-right-color: #8c8c8c;
    border-bottom-color: #8c8c8c;
}

.tool.dim {
    color: #4b4b4b;
}

.tool.axis {
    width: 34px;
}

.tool.on-dim {
    background: #292929;
    border-radius: 4px;
    color: #1d4a78;
}

.sep.thick {
    width: 3px;
    height: 38px;
    margin: 0 28px 0 36px;
    background: #303030;
}

.sep.wide {
    margin: 0 10px 0 13px;
}

.snap {
    display: flex;
    align-items: center;
    gap: 6px;
    margin-right: 36px;
    color: #9a9a9a;
    white-space: nowrap;
}

.snap input {
    appearance: none;
    width: 20px;
    height: 20px;
    border: 2px solid #9a9a9a;
    border-radius: 2px;
}

.tool.snap-tool {
    width: 36px;
}

.workspaces {
    margin-left: auto;
    height: 38px;
    display: flex;
    align-items: center;
    border-left: 1px solid #161616;
    border-right: 3px solid #303030;
    padding: 0 11px 0 34px;
    gap: 67px;
    color: #8c8c8c;
}

.workspaces .current {
    display: flex;
    align-items: center;
    gap: 22px;
    margin-right: -33px;
    color: #2d8ceb;
}

.workspaces button {
    margin-left: -6px;
    color: #b4b4b4;
}

.help-search {
    width: 290px;
    height: 27px;
    margin: 0 8px 0 6px;
    display: flex;
    align-items: center;
    gap: 16px;
    padding-left: 5px;
    background: #161616;
    border: 1px solid #303030;
    border-radius: 3px;
}

.help-search input {
    width: 200px;
    font-size: 18px;
}

.help-search input::placeholder {
    color: #8c8c8c;
}

/* panels */
.workspace {
    flex: 908 1 0;
    min-height: 0;
    display: grid;
    grid-template-columns: 542px 1fr 329px;
    gap: 6px;
    padding: 0 2px;
}

.panel {
    min-width: 0;
    min-height: 0;
    overflow: hidden;
    display: flex;
    flex-direction: column;
    background: #232323;
}

.tabs {
    flex: none;
    height: 39px;
    display: flex;
}

.tabs > a {
    line-height: 42px;
}

.tab {
    display: flex;
    align-items: center;
    padding-top: 5px;
    border-bottom: 3px solid #b8b8b8;
    color: #d2d2d2;
    white-space: nowrap;
}

.tab .x {
    width: 22px;
    color: #8c8c8c;
    font-size: 16px;
}

.tab .lock {
    width: 14px;
    height: 18px;
    margin: 0 13px 4px 16px;
    color: #b4b4b4;
}

.tab b {
    font-weight: normal;
    color: #2d8ceb;
}

.tab .ic14 {
    margin-left: 14px;
    color: #b4b4b4;
}

.tab-project {
    width: 118px;
    padding-left: 18px;
}

.effect-path {
    flex: none;
    height: 34px;
    padding-left: 8px;
    border-bottom: 2px solid #0a0a0a;
    color: #b4b4b4;
    font-family: "Liberation Mono", "Noto Sans CJK SC", monospace;
    font-size: 16px;
    line-height: 38px;
    white-space: nowrap;
}

.effect-scroll {
    flex: 1;
    min-height: 0;
    display: flex;
}

.effect-rows {
    flex: 1;
    overflow: hidden;
    padding-top: 2px;
    background: #262626;
}

.vscroll {
    flex: none;
    width: 26px;
    height: 100%;
    background: #1c1c1c;
    border-left: 1px solid #161616;
}

.vscroll i {
    display: block;
    background: #333;
    border-radius: 12px;
}

.thumb-left {
    height: 23%;
    margin: 220px 2px 0 1px;
}

.row {
    height: 30px;
    display: grid;
    grid-template-columns: 295px 1fr;
    align-items: center;
    border-top: 1px solid #1f1f1f;
    color: #bdbdbd;
    font-family: "Noto Sans CJK SC", sans-serif;
    font-size: 17px;
}

.row.off {
    color: #4b4b4b;
}

.name {
    display: flex;
    align-items: center;
    padding-left: 64px;
    white-space: nowrap;
}

.name svg {
    width: 16px;
    height: 16px;
    margin-right: 8px;
    color: #9a9a9a;
}

.name .watch {
    width: 20px;
    height: 22px;
    margin: 0 5px 0 6px;
    color: #b4b4b4;
}

.name svg + .watch {
    margin-left: 6px;
}

.off .name .watch {
    color: #4b4b4b;
}

.name.top {
    padding-left: 37px;
}

.name.top svg {
    margin-right: 6px;
}

.name.dot::before {
    content: "";
    width: 2px;
    height: 2px;
    margin: 0 15px 0 7px;
    background: #484848;
}

.val {
    padding: 3px 0 0 1px;
    color: #2d8ceb;
    font-family: "Liberation Mono", monospace;
    font-size: 13px;
}

.off .val {
    color: #4b4b4b;
}

.val small {
    margin: 0 4px 0 3px;
    color: #8c8c8c;
    font-size: 12px;
}

.off .val small {
    color: #4b4b4b;
}

.row select {
    height: 27px;
    font-size: 18px;
}

.w194 { width: 194px; }
.w212 { width: 212px; }

.sprite-btn {
    width: 195px;
    height: 28px;
    background: #292929;
    font-size: 18px;
}

.curve-tools {
    display: flex;
    padding: 12px 0 0 165px;
}

.curve-tools svg {
    width: 20px;
    height: 20px;
    margin-right: 22px;
}

.curve-tools svg:nth-child(2) { margin-right: 82px; }
.curve-tools svg:nth-child(3) { margin-right: 110px; }

/* composition */
.comp .tabs {
    padding-left: 16px;
}

.tab-layer {
    display: flex;
    align-items: center;
    gap: 18px;
    margin-left: 54px;
}

.tab-footage {
    margin-left: 106px;
}

.crumbs {
    flex: none;
    height: 42px;
    display: flex;
    align-items: center;
    padding: 0 0 2px 44px;
    border-bottom: 2px solid #0a0a0a;
    white-space: nowrap;
}

.crumbs span {
    width: 47px;
    text-align: center;
    font-size: 17px;
}

.crumbs span:nth-of-type(3) {
    width: 35px;
}

.crumbs .current {
    padding: 0 34px 0 15px;
    background: #161616;
    border-radius: 3px;
    color: #2d8ceb;
}

/* the composition sits left of the middle, clear of the floating panel */
.viewer {
    flex: 1;
    min-height: 0;
    display: flex;
    justify-content: center;
    align-items: flex-start;
    padding: 63px 177px 0 0;
}

.canvas {
    width: 360px;
    height: 640px;
}

.comp-footer {
    flex: none;
    height: 36px;
    display: flex;
    align-items: center;
    padding: 4px 0 0 7px;
    border-top: 1px solid #161616;
    font-size: 17px;
}

.comp-footer select {
    height: 28px;
    border-radius: 3px;
}

.comp-footer .sep {
    height: 22px;
    width: 2px;
    margin: 0 7px;
}

.zoom { width: 105px; }
.comp-footer .quality { width: 128px; font-size: 19px; }

.fbtn {
    width: 33px;
    height: 28px;
}

.fbtn.on {
    background: #161616;
    border-radius: 3px;
}

.fbtn svg {
    width: 22px;
    height: 22px;
}

.exposure {
    margin: 0 14px 0 2px;
    color: #2d8ceb;
}

.timebox {
    width: 104px;
    height: 28px;
    text-align: center;
    background: #1f1f1f;
    border: 1px solid #303030;
    border-radius: 3px;
}

/* right column */
.side {
    flex-direction: row;
}

.side-list {
    flex: 1;
    min-width: 0;
}

.side-list > a {
    display: block;
    height: 45px;
    padding-left: 19px;
    border-bottom: 3px solid #161616;
    line-height: 42px;
}

.side .vscroll {
    width: 17px;
}

.thumb-right {
    height: 82%;
    margin: 1px 0 0;
}

.brush-head {
    display: flex;
    align-items: center;
    justify-content: space-between;
    height: 43px;
    padding: 0 17px 0 19px;
    color: #c4c4c4;
}

.brush-grid {
    display: grid;
    grid-template-columns: 46px repeat(4, 48px);
    grid-template-rows: 46px 48px 48px;
    width: 261px;
    height: 151px;
    margin: 14px 0 7px 16px;
    background: #262626;
    border: solid #000;
    border-width: 2px 0 2px 2px;
}

.brush-grid button {
    flex-direction: column;
    border: solid #1f1f1f;
    border-width: 0 1px 1px 0;
    color: #4b4b4b;
    font-size: 14px;
    line-height: 19px;
}

.brush-grid .sel {
    background: #333;
}

.tip {
    display: block;
    margin: auto;
    border-radius: 50%;
    background: #929292;
}

.tip.soft {
    background: radial-gradient(#929292, #262626 75%);
}

.s1 { width: 1px; height: 1px; }
.s3 { width: 4px; height: 4px; }
.s9 { width: 9px; height: 9px; }
.s15 { width: 15px; height: 15px; }
.s20 { width: 20px; height: 20px; }

.brush-props {
    display: flex;
    justify-content: space-between;
    color: #4b4b4b;
}

.brush-props dl {
    display: grid;
    grid-template-columns: 129px 62px;
    gap: 3px 7px;
    font-size: 19px;
    white-space: nowrap;
}

.brush-props dt {
    text-align: right;
}

.tip-preview {
    flex: none;
    display: flex;
    width: 86px;
    height: 86px;
    margin: 26px 22px 0 0;
    border: 2px solid #000;
}

.spacing {
    display: flex;
    align-items: center;
    padding-left: 39px;
    color: #4b4b4b;
    font-size: 19px;
}

.spacing label {
    display: flex;
    align-items: center;
    gap: 6px;
    width: 97px;
}

.spacing span {
    width: 87px;
}

.spacing svg {
    width: 18px;
    height: 18px;
    margin-right: 20px;
}

.spacing input {
    appearance: none;
    width: 20px;
    height: 20px;
    border-radius: 2px;
    background: #4b4b4b url("data:image/svg+xml,%3Csvg xmlns='http://www.w3.org/2000/svg' width='20' height='20'%3E%3Cpath d='M4 11l4 4 8-10' fill='none' stroke='%23232323' stroke-width='3'/%3E%3C/svg%3E");
}

.dyn-head {
    display: flex;
    align-items: center;
    gap: 15px;
    margin: 12px 8px 7px 55px;
    color: #4b4b4b;
}

.dyn-head::after {
    content: "";
    flex: 1;
    height: 2px;
    background: #333;
}

.dyn-row {
    display: grid;
    grid-template-columns: 129px 158px;
    gap: 7px;
    align-items: center;
    color: #4b4b4b;
    font-size: 19px;
}

.dyn-row > :first-child {
    text-align: right;
}

.dyn-row.min {
    padding-top: 3px;
}

.dyn-row select {
    height: 28px;
    background-color: #292929;
    border: none;
    border-radius: 3px;
    color: #4b4b4b;
    opacity: 1;
    font-size: 20px;
}

/* timeline */
.timeline {
    flex: 507 1 0;
    min-height: 0;
    display: flex;
    flex-direction: column;
    margin: 6px 2px 2px;
    background: #232323;
    border: 1px solid #2d7fd4;
}

.comp-tabs {
    flex: none;
    height: 41px;
    display: flex;
    align-items: center;
    gap: 82px;
    padding-left: 166px;
    overflow: hidden;
}

.comp-tabs a {
    display: flex;
    align-items: center;
    gap: 18px;
}

.comp-tabs .cut {
    width: 4px;
}

.comp-tabs button {
    margin: 0 4px 0 -42px;
    color: #b4b4b4;
}

.timeline-main {
    flex: 1;
    min-height: 0;
    display: grid;
    grid-template-columns: 1117px 1fr 35px;
}

.layers {
    margin-right: -2px;
    border-right: 1px solid #0a0a0a;
}

.layers-top {
    height: 53px;
    display: flex;
    align-items: center;
    color: #b4b4b4;
}

.timecode {
    width: 181px;
    padding: 3px 0 0 16px;
    white-space: nowrap;
}

.timecode strong {
    display: block;
    padding-left: 18px;
    color: #2d8ceb;
    font-size: 20px;
    font-weight: 600;
    line-height: 24px;
}

.timecode span {
    display: block;
    color: #1d5590;
    font-family: "Liberation Mono", monospace;
    font-size: 13px;
    line-height: 20px;
}

.layer-search {
    width: 684px;
    height: 29px;
    display: flex;
    align-items: center;
    padding-left: 10px;
    margin-right: 8px;
    background: #161616;
    border: 1px solid #2c2c2c;
    border-radius: 3px;
}

.layer-search svg {
    width: 26px;
    height: 20px;
}

.layer-search input {
    flex: 1;
}

.layers-top button {
    width: 39px;
    height: 30px;
}

.layers-top button:nth-of-type(1) {
    width: 60px;
}

.layers-top button:nth-of-type(5) {
    width: 64px;
}

.layers-top button svg {
    width: 24px;
    height: 24px;
}

table {
    width: 100%;
    table-layout: fixed;
    border-collapse: collapse;
}

.c-av { width: 101px; }
.c-num { width: 97px; }
.c-name { width: 196px; }
.c-sw { width: 205px; }
.c-mode { width: 112px; }
.c-trk { width: 137px; }
.c-parent { width: 175px; }

thead tr {
    height: 29px;
    background: #323232;
    border-top: 2px solid #0a0a0a;
    border-bottom: 2px solid #0a0a0a;
}

th {
    position: relative;
    padding-left: 10px;
    text-align: left;
    font-weight: normal;
    color: #a0a0a0;
    line-height: 24px;
    white-space: nowrap;
}

th:not(:last-child):not(:nth-child(5))::after {
    content: "";
    position: absolute;
    right: 0;
    top: 5px;
    width: 1px;
    height: 16px;
    background: #161616;
}

th small {
    font-size: 16px;
}

th .t {
    display: inline-block;
    width: 27px;
    padding-left: 2px;
    font-size: 16px;
}

tbody tr {
    height: 30px;
    background: #2c2c2c;
    border-bottom: 1px solid #232323;
}

td {
    color: #bdbdbd;
}

.cells {
    display: flex;
    align-items: center;
    color: #b4b4b4;
}

.cells svg {
    width: 18px;
    height: 18px;
}

.cells.av {
    padding-left: 7px;
    gap: 5px;
}

th .cells.av, th .cells.sw {
    margin-left: -10px;
}

.cells.av > * {
    width: 18px;
}

.cells .box {
    height: 20px;
    background: #202020;
}

.cells.sw {
    padding-left: 8px;
    gap: 3px;
}

.cells.sw > * {
    width: 19px;
    height: 20px;
}

.cells .tag {
    margin: 0 16px 0 11px;
}

.hash {
    font-size: 16px;
}

.cells.num {
    padding-left: 4px;
    font-size: 16px;
}

.cells.num svg {
    width: 16px;
    margin-right: 6px;
}

.label {
    width: 23px;
    height: 24px;
    margin-right: 9px;
    background: #b23636;
}

.cells.src {
    padding-left: 5px;
    font-family: "Liberation Mono", "Noto Sans CJK SC", monospace;
    font-size: 16px;
    white-space: nowrap;
}

.solid {
    width: 25px;
    height: 25px;
    margin-right: 8px;
    background: #000;
}

td select {
    height: 26px;
    width: 134px;
    border: none;
    font-size: 19px;
}

td .mode {
    display: block;
    width: 104px;
    margin-left: 6px;
}

.cells.trk {
    padding-left: 5px;
    gap: 10px;
}

.cells.trk .box {
    width: 19px;
}

.cells.trk select {
    width: 97px;
}

.cells.parent {
    padding-left: 8px;
    gap: 9px;
}

/* time graph */
.time {
    display: flex;
    flex-direction: column;
    padding-left: 13px;
}

.navigator {
    height: 12px;
    margin: 10px -10px 0;
    background: #666;
    border: solid #2d8ceb;
    border-width: 0 10px;
    border-radius: 6px;
}

.ruler {
    position: relative;
    height: 32px;
    display: flex;
    justify-content: space-between;
    border-bottom: 1px solid #0a0a0a;
}

.ruler span {
    width: 0;
    display: flex;
    flex-direction: column;
    align-items: center;
    color: #b4b4b4;
    font-size: 15px;
    line-height: 25px;
    white-space: nowrap;
}

.ruler span::after {
    content: "";
    width: 1px;
    height: 6px;
    background: #777;
}

.cti {
    position: absolute;
    left: -9px;
    bottom: 2px;
    width: 20px;
    height: 20px;
}

.workarea {
    height: 22px;
    margin: 0 -10px 2px;
    background: #5f5f5f;
    border: solid #2d8ceb;
    border-width: 0 10px;
    border-radius: 5px;
}

.cached {
    height: 4px;
    background: #12c020;
}

.tracks {
    position: relative;
    flex: 1;
    background: #303030;
    border-top: 1px solid #0a0a0a;
}

.track {
    height: 30px;
    padding: 4px 0 3px;
    background: #404040;
    border-bottom: 1px solid #232323;
}

.track i {
    display: block;
    height: 22px;
    background: #7a3a3a;
}

.playhead, .preview-line {
    position: absolute;
    left: 0;
    top: -30px;
    bottom: 0;
    width: 2px;
    background: #2d8ceb;
}

.preview-line {
    left: 10.4%;
    top: 0;
    width: 1px;
    background: #f00;
}

.time-side {
    display: flex;
    flex-direction: column;
    align-items: flex-end;
    gap: 9px;
    padding: 55px 1px 0 0;
}

.time-side svg {
    width: 20px;
    height: 22px;
}

.timeline-footer {
    flex: none;
    height: 25px;
    display: grid;
    grid-template-columns: 1117px 1fr;
    border-top: 1px solid #0a0a0a;
}

.foot-left, .foot-zoom {
    display: flex;
    align-items: center;
}

.foot-left {
    padding-left: 4px;
    white-space: nowrap;
}

.foot-left button {
    width: 29px;
    color: #b4b4b4;
}

.foot-left button.on {
    color: #2d8ceb;
}

.foot-left svg {
    width: 20px;
    height: 20px;
}

.foot-left span {
    margin: 0 12px 0 8px;
    color: #b4b4b4;
}

.foot-left em {
    color: #4b4b4b;
    font-size: 19px;
}

.foot-zoom {
    padding-left: 10px;
}

.small-hill {
    width: 14px;
    height: 9px;
}

.foot-zoom input {
    appearance: none;
    width: 74px;
    height: 2px;
    margin: 0 17px 0 17px;
    background: #4b4b4b;
}

.foot-zoom input::-webkit-slider-thumb {
    appearance: none;
    width: 15px;
    height: 15px;
    border: 2px solid #9a9a9a;
    border-radius: 50%;
    background: #232323;
}

.big-hill {
    width: 24px;
    height: 13px;
}

/* floating script panel */
.autosway {
    position: absolute;
    top: 115px;
    right: 360px;
    width: 620px;
    height: 470px;
    display: flex;
    flex-direction: column;
    background: #232323;
    border: 2px solid #484848;
    border-radius: 5px;
    box-shadow: 0 8px 16px rgba(0, 0, 0, 0.3);
    overflow: hidden;
}

.float-bar {
    height: 44px;
    display: flex;
    justify-content: flex-end;
    align-items: flex-end;
    padding-bottom: 4px;
    background: #f3f3f3;
    border-bottom: 1px solid #161616;
}

.float-bar button {
    width: 30px;
    height: 30px;
    background: #d9d9d9;
    color: #f3f3f3;
    font-size: 16px;
    font-weight: bold;
}

.float-title {
    display: flex;
    align-items: center;
    gap: 13px;
    height: 43px;
    padding: 4px 0 0 19px;
    color: #b4b4b4;
    font-size: 19px;
    white-space: nowrap;
}

.float-body {
    flex: 1;
    margin: 0 2px 3px;
    padding: 17px 0 0 17px;
    border: 1px solid #2c2c2c;
}

fieldset {
    width: 292px;
    margin: 0 0 8px;
    padding: 4px 11px 6px 9px;
    border: 1px solid #333;
    border-radius: 2px;
}

.outer {
    width: 345px;
    margin: 0;
    padding: 9px 26px 14px 25px;
}

legend {
    padding: 0 9px;
}

.outer > legend {
    margin-left: -15px;
    padding: 0 8px;
    font-size: 17px;
}

.btns {
    display: flex;
    gap: 2px;
    width: 292px;
}

.btns.big {
    width: 270px;
}

.btns button {
    height: 30px;
    border: 2px solid #8a8a8a;
    color: #8c8c8c;
}

.btns.big button {
    height: 45px;
}

.grow {
    flex: 1;
}

.btns .q {
    width: 30px;
    font-size: 16px;
}

.btns .mid {
    width: 50px;
}

.btns .end {
    width: 112px;
}

.btns.bake {
    margin: 11px 0 5px;
}

.float-body p {
    padding: 1px 0 0 3px;
    font-size: 16px;
}

/* windows taskbar */
.taskbar {
    flex: none;
    height: 72px;
    display: grid;
    grid-template-columns: 1fr auto 1fr;
    align-items: center;
    border-top: 2px solid #4a4a4a;
    background: linear-gradient(90deg, #2e2a18 0%, #2f2716 10%, #352218 13%, #262423 19%, #272626 25%, #2d2324 31%, #222639 38%, #282828 43%, #2a2b2c 53%, #252734 58%, #2b2a2a 61%, #302e1c 66%, #2b2b22 70%, #20293c 74%, #172c44 81%, #152b35 87%, #173035 100%);
    color: #fff;
    font-size: 17px;
    line-height: 24px;
}

.weather {
    display: flex;
    align-items: center;
    gap: 8px;
    padding-left: 28px;
}

.weather > svg {
    width: 40px;
    height: 40px;
}

.weather span, .clock span {
    display: block;
}

.apps {
    display: flex;
    gap: 8px;
}

.apps button {
    position: relative;
    width: 58px;
    height: 60px;
}

.apps svg {
    width: 36px;
    height: 44px;
}

.apps .active {
    background: #3a3a3e;
    border: 1px solid #48484c;
    border-radius: 6px;
}

.apps .ae {
    width: 34px;
    height: 38px;
}

.ae text {
    font-size: 20px;
    font-weight: 600;
}

.apps .running::after, .apps .active::after {
    content: "";
    position: absolute;
    bottom: -1px;
    width: 9px;
    height: 5px;
    border-radius: 3px;
    background: #9a9a9a;
}

.apps .active::after {
    width: 24px;
    background: #4cc2ff;
}

.tray {
    display: flex;
    align-items: center;
    justify-content: flex-end;
    padding-right: 30px;
}

.tray svg {
    width: 26px;
    height: 22px;
    margin-right: 11px;
}

.tray svg:first-child {
    width: 20px;
    margin-right: 24px;
}

.ime {
    margin-right: 24px;
    font-size: 23px;
}

.clock {
    width: 95px;
    text-align: right;
}

.badge {
    width: 24px;
    height: 24px;
    margin-left: 11px;
    border-radius: 50%;
    background: #4cc2ff;
    color: #1c1c1c;
    font-size: 14px;
    text-align: center;
}
```
